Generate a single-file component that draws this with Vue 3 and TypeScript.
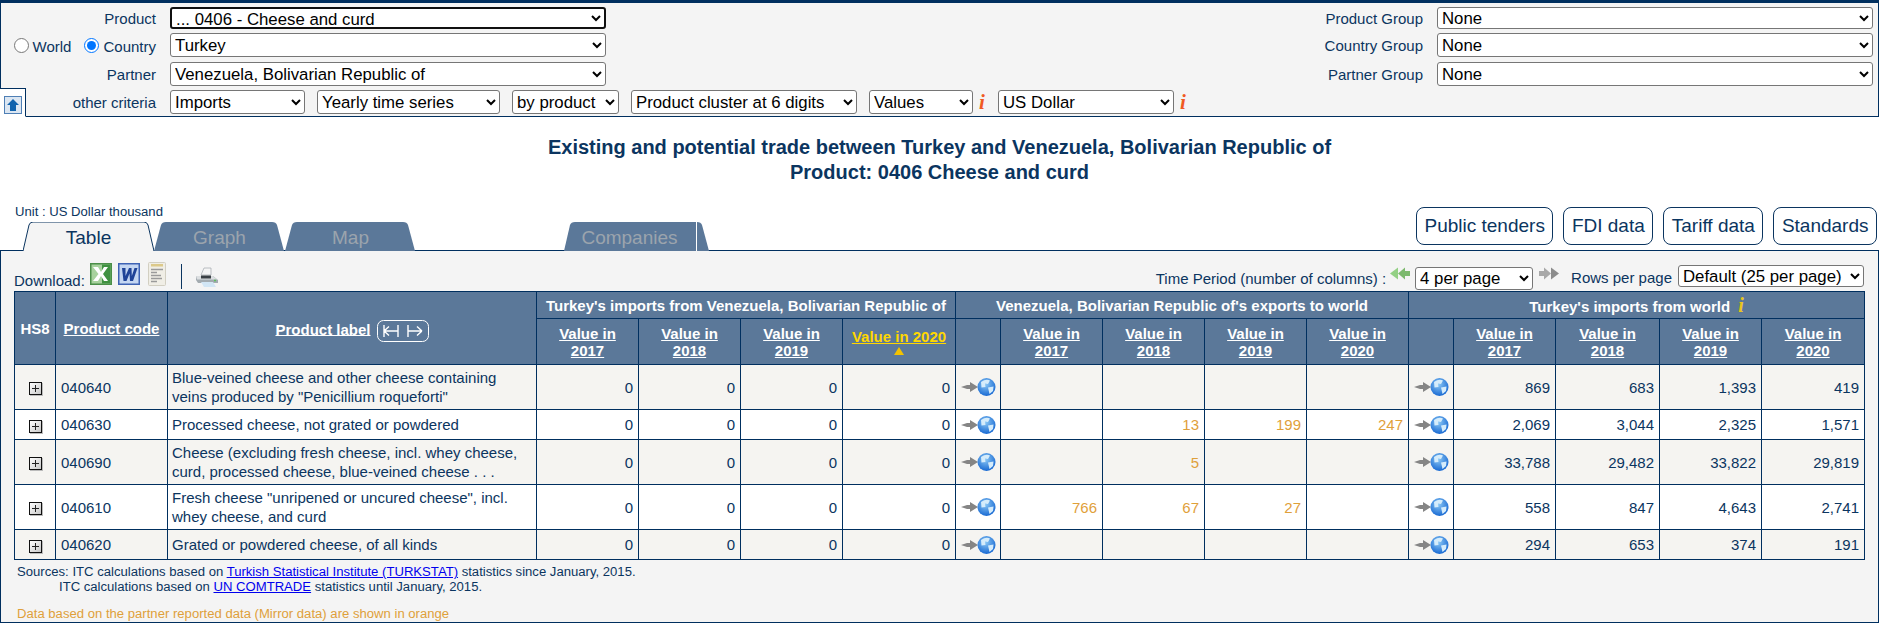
<script setup lang="ts">
interface Row {
  code: string
  label: string[]
  exports: (string | null)[]
  imports: string[]
}

const rows: Row[] = [
  {
    code: '040640',
    label: ['Blue-veined cheese and other cheese containing', 'veins produced by "Penicillium roqueforti"'],
    exports: [null, null, null, null],
    imports: ['869', '683', '1,393', '419'],
  },
  {
    code: '040630',
    label: ['Processed cheese, not grated or powdered'],
    exports: [null, '13', '199', '247'],
    imports: ['2,069', '3,044', '2,325', '1,571'],
  },
  {
    code: '040690',
    label: ['Cheese (excluding fresh cheese, incl. whey cheese,', 'curd, processed cheese, blue-veined cheese . . .'],
    exports: [null, '5', null, null],
    imports: ['33,788', '29,482', '33,822', '29,819'],
  },
  {
    code: '040610',
    label: ['Fresh cheese "unripened or uncured cheese", incl.', 'whey cheese, and curd'],
    exports: ['766', '67', '27', null],
    imports: ['558', '847', '4,643', '2,741'],
  },
  {
    code: '040620',
    label: ['Grated or powdered cheese, of all kinds'],
    exports: [null, null, null, null],
    imports: ['294', '653', '374', '191'],
  },
]

const years = ['2017', '2018', '2019', '2020']
const colWidths = [41, 112, 369, 102, 102, 102, 113, 45, 102, 102, 102, 102, 45, 102, 104, 102, 103]
const sideTabs = ['Graph', 'Map']
</script>

<template>
  <div class="page">
    <!-- criteria panel -->
    <form class="criteria" @submit.prevent>
      <div class="crit-col">
        <div class="crit-row">
          <label class="crit-label">Product</label>
          <select class="sel wide focused"><option>... 0406 - Cheese and curd</option></select>
        </div>
        <div class="crit-row">
          <div class="crit-label radios">
            <input type="radio" name="scope" /><span class="world">World</span>
            <input type="radio" name="scope" checked /><span>Country</span>
          </div>
          <select class="sel wide"><option>Turkey</option></select>
        </div>
        <div class="crit-row">
          <label class="crit-label">Partner</label>
          <select class="sel wide"><option>Venezuela, Bolivarian Republic of</option></select>
        </div>
        <div class="crit-row other">
          <label class="crit-label">other criteria</label>
          <select class="sel w-imports"><option>Imports</option></select>
          <select class="sel w-series"><option>Yearly time series</option></select>
          <select class="sel w-by"><option>by product</option></select>
          <select class="sel w-cluster"><option>Product cluster at 6 digits</option></select>
          <select class="sel w-values"><option>Values</option></select>
          <span class="info">i</span>
          <select class="sel w-usd"><option>US Dollar</option></select>
          <span class="info">i</span>
        </div>
      </div>
      <div class="crit-col right">
        <div class="crit-row">
          <label class="crit-label">Product Group</label>
          <select class="sel wide"><option>None</option></select>
        </div>
        <div class="crit-row">
          <label class="crit-label">Country Group</label>
          <select class="sel wide"><option>None</option></select>
        </div>
        <div class="crit-row">
          <label class="crit-label">Partner Group</label>
          <select class="sel wide"><option>None</option></select>
        </div>
      </div>
      <div class="notch">
        <svg width="18" height="18" viewBox="0 0 18 18">
          <rect x="0.5" y="0.5" width="17" height="17" fill="#dbe6f2" stroke="#4f7fb5" />
          <path d="M9 3 L15 9 H12 V15 H6 V9 H3 Z" fill="#0f62ad" />
        </svg>
      </div>
    </form>

    <h1 class="title">
      Existing and potential trade between Turkey and Venezuela, Bolivarian Republic of<br />
      Product: 0406 Cheese and curd
    </h1>

    <!-- tabs -->
    <div class="tabbar">
      <div class="unit">Unit : US Dollar thousand</div>
      <div class="tabs">
        <a class="tab active">
          <svg class="tab-bg" viewBox="0 0 131 29" preserveAspectRatio="none">
            <path d="M0 29 L6 3 Q7 0 10 0 H121 Q124 0 125 3 L131 29" fill="#f4f4f4" stroke="#0b3560" />
          </svg>
          <span>Table</span>
        </a>
        <a v-for="t in sideTabs" :key="t" class="tab">
          <svg class="tab-bg" viewBox="0 0 131 29" preserveAspectRatio="none">
            <path d="M0 29 L7 3 Q8 0 12 0 H118 Q122 0 123 3 L130 29 Z" fill="#5b7899" />
          </svg>
          <span>{{ t }}</span>
        </a>
        <a class="tab companies">
          <svg class="tab-bg" viewBox="0 0 145 29" preserveAspectRatio="none">
            <path d="M0 29 L6 3 Q7 0 11 0 H133 Q137 0 138 3 L145 29 Z" fill="#5b7899" />
            <path d="M132.5 0 V29" stroke="#fff" />
          </svg>
          <span>Companies</span>
        </a>
      </div>
      <div class="links">
        <a class="link-btn">Public tenders</a>
        <a class="link-btn">FDI data</a>
        <a class="link-btn">Tariff data</a>
        <a class="link-btn">Standards</a>
      </div>
    </div>

    <div class="panel">
      <!-- toolbar -->
      <div class="toolbar">
        <div class="downloads">
          <span class="dl-label">Download:</span>
          <svg class="ic-xls" width="22" height="22" viewBox="0 0 22 22">
            <rect width="22" height="22" fill="#4b8f48" />
            <rect x="1.5" y="1.5" width="19" height="19" fill="#a8d29e" />
            <rect x="12" y="1.5" width="8.5" height="19" fill="#3f9140" />
            <path d="M3 4 H8 L11 9 L14 4 H18 L13 11 L18 18 H14 L11 13 L8 18 H3 L8.5 11 Z" fill="#fff" />
          </svg>
          <svg class="ic-doc" width="22" height="22" viewBox="0 0 22 22">
            <rect width="22" height="22" fill="#3e63b5" />
            <rect x="1.5" y="1.5" width="19" height="19" fill="#c4d6f2" />
            <path d="M4 5 H7.5 L7.5 13 L11 5 H13.5 L13.8 13 L16.5 5 H19.5 L15 18 H12 L11.5 10.5 L8.5 18 H5.5 Z" fill="#1f4398" />
          </svg>
          <svg class="ic-txt" width="18" height="24" viewBox="0 0 18 24">
            <rect x="0.5" y="0.5" width="17" height="23" rx="1" fill="#f0eee6" stroke="#d2cfc2" />
            <rect x="3" y="2" width="12" height="2.5" fill="#dcc98a" />
            <path d="M3 7.5 H15 M3 10.5 H9 M3 13.5 H13 M3 16.5 H14 M3 19.5 H9" stroke="#9a9a9a" stroke-width="1.4" />
          </svg>
          <span class="sep"></span>
          <svg class="printer" width="24" height="20" viewBox="0 0 24 20">
            <path d="M6 8 L9 1 H16 L16 8 Z" fill="#f5f5f5" stroke="#a2a8ad" stroke-width="0.7" />
            <path d="M1 9 H18 L23 13 V16 H3 L1 13 Z" fill="#a3abb0" />
            <path d="M1 9 H18 L22 12.5 H2 Z" fill="#dcdfe1" />
            <rect x="6" y="8.5" width="10" height="3" fill="#3a4045" />
            <path d="M6 15 H18 L21 20 H9 Z" fill="#d2e6f5" />
            <circle cx="20" cy="13.5" r="1" fill="#5ac05a" />
          </svg>
        </div>
        <div class="paging">
          <span class="pg-text">Time Period (number of columns) :</span>
          <svg class="chev" width="20" height="13" viewBox="0 0 20 13">
            <path d="M0 6.5 L8 0.5 V12.5 Z" fill="#93d084" />
            <path d="M8 6.5 L15 0.5 V4 H20 V9 H15 V12.5 Z" fill="#7cb96d" />
          </svg>
          <select class="sel w-per"><option>4 per page</option></select>
          <svg class="chev next" width="20" height="13" viewBox="0 0 20 13">
            <path d="M0 4 H5 V0.5 L12 6.5 L5 12.5 V9 H0 Z" fill="#a8a8a8" />
            <path d="M12 0.5 L20 6.5 L12 12.5 Z" fill="#8c8c8c" />
          </svg>
          <span class="pg-text rows-lbl">Rows per page</span>
          <select class="sel w-rows"><option>Default (25 per page)</option></select>
        </div>
      </div>

      <!-- data table -->
      <table class="data">
        <colgroup>
          <col v-for="(w, i) in colWidths" :key="i" :style="{ width: w + 'px' }" />
        </colgroup>
        <thead>
          <tr class="group-row">
            <th rowspan="2">HS8</th>
            <th rowspan="2"><a>Product code</a></th>
            <th rowspan="2" class="label-head">
              <a>Product label</a>
              <span class="expand">
                <svg width="52" height="22" viewBox="0 0 52 22">
                  <rect x="0.5" y="0.5" width="51" height="21" rx="6" fill="none" stroke="#fff" />
                  <path d="M7 5 V17 M21 5 V17 M7 11 H21 M7 11 L12 6.5 M7 11 L12 15.5 M31 5 V17 M31 11 H45 M45 11 L40 6.5 M45 11 L40 15.5" fill="none" stroke="#fff" stroke-width="1.4" />
                </svg>
              </span>
            </th>
            <th colspan="4">Turkey's imports from Venezuela, Bolivarian Republic of</th>
            <th colspan="5">Venezuela, Bolivarian Republic of's exports to world</th>
            <th colspan="5">Turkey's imports from world <span class="info yellow">i</span></th>
          </tr>
          <tr class="year-row">
            <th v-for="y in years.slice(0, 3)" :key="y"><a>Value in<br />{{ y }}</a></th>
            <th class="sorted"><a>Value in 2020</a><div class="tri"></div></th>
            <th></th>
            <th v-for="y in years" :key="'e' + y"><a>Value in<br />{{ y }}</a></th>
            <th></th>
            <th v-for="y in years" :key="'i' + y"><a>Value in<br />{{ y }}</a></th>
          </tr>
        </thead>
        <tbody>
          <tr v-for="(r, i) in rows" :key="r.code" :class="[i % 2 === 0 ? 'odd' : 'even', r.label.length > 1 ? 'tall' : '']">
            <td class="center"><span class="plus"></span></td>
            <td>{{ r.code }}</td>
            <td class="label-cell"><template v-for="(l, n) in r.label" :key="n"><br v-if="n" />{{ l }}</template></td>
            <td class="num">0</td>
            <td class="num">0</td>
            <td class="num">0</td>
            <td class="num">0</td>
            <td class="center">
              <svg class="arrow-globe" width="36" height="20" viewBox="0 0 36 20">
                <defs>
                  <radialGradient id="globe" cx="0.45" cy="0.35" r="0.7">
                    <stop offset="0" stop-color="#8cc8f5" />
                    <stop offset="1" stop-color="#0f62d0" />
                  </radialGradient>
                </defs>
                <path d="M1 10 L7 8 H10 V5 L18 10 L10 15 V12 H7 Z" fill="#858585" />
                <circle cx="26.5" cy="10" r="9" fill="url(#globe)" />
                <path d="M21 5 Q26 1.5 30 3.5 L28 7 L25 6.5 L25.5 10 L21.5 10.5 Z M28 10.5 L33.5 9.5 L33 14 L29.5 17 Z" fill="#d5ecfb" />
              </svg>
            </td>
            <td v-for="(v, n) in r.exports" :key="n" class="num mirror">{{ v }}</td>
            <td class="center">
              <svg class="arrow-globe" width="36" height="20" viewBox="0 0 36 20">
                <path d="M1 10 L7 8 H10 V5 L18 10 L10 15 V12 H7 Z" fill="#858585" />
                <circle cx="26.5" cy="10" r="9" fill="url(#globe)" />
                <path d="M21 5 Q26 1.5 30 3.5 L28 7 L25 6.5 L25.5 10 L21.5 10.5 Z M28 10.5 L33.5 9.5 L33 14 L29.5 17 Z" fill="#d5ecfb" />
              </svg>
            </td>
            <td v-for="(v, n) in r.imports" :key="n" class="num">{{ v }}</td>
          </tr>
        </tbody>
      </table>

      <div class="sources">
        <div>Sources: ITC calculations based on <a>Turkish Statistical Institute (TURKSTAT)</a> statistics since January, 2015.</div>
        <div class="src2">ITC calculations based on <a>UN COMTRADE</a> statistics until January, 2015.</div>
        <div class="note">Data based on the partner reported data (Mirror data) are shown in orange</div>
      </div>
    </div>
  </div>
</template>

<style>
html, body {
  margin: 0;
  background: #fff;
}
</style>

<style scoped>
.page {
  font-family: "Liberation Sans", Arial, sans-serif;
  color: #0b3560;
  font-size: 15px;
  width: 1879px;
  height: 625px;
  overflow: hidden;
}

.criteria {
  position: relative;
  display: flex;
  justify-content: space-between;
  height: 113px;
  background: #f4f4f4;
  border-top: 3px solid #002f5f;
  border-bottom: 1px solid #002f5f;
  border-left: 1px solid #002f5f;
  border-right: 1px solid #002f5f;
  padding: 0 5px 0 0;
}
.crit-col {
  padding-top: 4px;
}
.crit-row {
  display: flex;
  align-items: center;
  height: 24px;
  margin-top: 4px;
}
.right .crit-row {
  justify-content: flex-end;
}
.crit-row:first-child {
  height: 22px;
  margin-top: 0;
}
.crit-row:first-child .sel {
  height: 22px;
}
.crit-row:nth-child(3) {
  margin-top: 5px;
}
.crit-label {
  text-align: right;
  font-size: 15px;
  margin-right: 14px;
}
.crit-col:first-child .crit-label {
  width: 155px;
}
.radios {
  display: flex;
  justify-content: flex-end;
  align-items: center;
}
.radios input {
  margin: 0 4px 0 0;
  width: 15px;
  height: 15px;
}
.radios span {
  margin-top: 2px;
}
.radios .world {
  margin-right: 13px;
}
.sel {
  font-family: "Liberation Sans", Arial, sans-serif;
  font-size: 16.8px;
  height: 24px;
  background: #fff;
  color: #000;
  border: 1px solid #767676;
  border-radius: 3px;
  padding: 0;
  box-sizing: border-box;
}
.wide {
  width: 436px;
}
.crit-row .focused {
  border: 2px solid #101010;
}
.other .sel {
  margin-right: 12px;
}
.w-imports { width: 135px; }
.w-series { width: 183px; }
.w-by { width: 107px; }
.w-cluster { width: 226px; }
.other .w-values { width: 104px; margin-right: 0; }
.other .w-usd { width: 176px; margin-right: 0; }
.info {
  font-family: "Liberation Serif", serif;
  font-weight: bold;
  font-style: italic;
  font-size: 21px;
  color: #f05a22;
  width: 25px;
  padding-left: 6px;
  box-sizing: border-box;
}
.info.yellow {
  color: #e8c61c;
  font-size: 20px;
  margin-left: 4px;
  padding: 0;
  width: auto;
}
.notch {
  position: absolute;
  left: -1px;
  bottom: -1px;
  width: 26px;
  height: 29px;
  background: #fff;
  border-top: 1px solid #002f5f;
  border-right: 1px solid #002f5f;
  border-bottom: 1px solid #fff;
  display: flex;
  align-items: flex-end;
  padding: 0 0 2px 4px;
  box-sizing: border-box;
}

.title {
  margin: 18px 0 0;
  height: 53px;
  font-size: 20px;
  line-height: 25px;
  text-align: center;
  font-weight: bold;
  color: #0b3560;
}

.tabbar {
  position: relative;
  height: 62px;
}
.unit {
  position: absolute;
  left: 15px;
  top: 16px;
  font-size: 13.12px;
  color: #0b3560;
}
.tabs {
  position: absolute;
  z-index: 1;
  left: 23px;
  top: 34px;
  display: flex;
}
.tab {
  position: relative;
  width: 131px;
  height: 29px;
  display: flex;
  align-items: center;
  justify-content: center;
  padding-top: 2px;
  box-sizing: border-box;
  font-size: 19px;
  color: #9ba4ad;
}
.tab span {
  position: relative;
}
.tab.active {
  color: #0b3560;
}
.tab-bg {
  position: absolute;
  inset: 0;
  width: 100%;
  height: 100%;
}
.companies {
  margin-left: 148px;
  width: 145px;
  padding-right: 14px;
}
.links {
  position: absolute;
  right: 2px;
  top: 19px;
  display: flex;
  gap: 10px;
}
.link-btn {
  height: 36px;
  line-height: 36px;
  padding: 0 7.5px;
  border: 1px solid #0b3560;
  border-radius: 8px;
  background: #fff;
  font-size: 19px;
  color: #0b3560;
}

.panel {
  position: relative;
  box-sizing: border-box;
  height: 373px;
  border: 1px solid #002f5f;
  background: #f4f4f4;
  padding: 0 14px 0 13px;
}
.toolbar {
  display: flex;
  justify-content: space-between;
  height: 40px;
}
.downloads {
  display: flex;
  align-items: flex-start;
}
.dl-label {
  margin: 21px 5px 0 0;
}
.ic-xls, .ic-doc {
  margin: 12px 6px 0 0;
}
.ic-doc {
  margin-right: 8px;
}
.ic-txt {
  margin-top: 11px;
}
.sep {
  width: 1px;
  height: 25px;
  background: #0b3560;
  margin: 13px 13px 0 15px;
}
.printer {
  margin-top: 16px;
}
.paging {
  display: flex;
  align-items: flex-start;
}
.pg-text {
  margin-top: 19px;
}
.chev {
  margin: 16px 5px 0 4px;
}
.chev.next {
  margin: 16px 12px 0 6px;
}
.w-per {
  width: 118px;
  height: 23px;
  margin-top: 16px;
}
.w-rows {
  width: 186px;
  height: 22px;
  margin: 14px 0 0 6px;
}
.rows-lbl {
  margin-top: 18px;
}

.data {
  table-layout: fixed;
  width: 1851px;
  border-collapse: collapse;
  font-size: 15px;
  color: #0b3560;
}
.data th, .data td {
  border: 1px solid #002f5f;
  padding: 0 5px;
}
.data th {
  background: #5b7899;
  color: #fff;
  font-weight: bold;
  text-align: center;
}
.data th a {
  text-decoration: underline;
}
.data .label-head {
  padding-top: 5px;
}
.group-row th {
  height: 26px;
}
.year-row th {
  height: 45px;
  line-height: 17px;
}
.sorted a {
  color: #ffd700;
}
.tri {
  width: 0;
  height: 0;
  margin: 2px auto 0;
  border-left: 5px solid transparent;
  border-right: 5px solid transparent;
  border-bottom: 8px solid #f2c200;
}
.expand {
  display: inline-block;
  vertical-align: middle;
  margin-left: 6px;
}
.expand svg {
  display: block;
}
tbody tr {
  height: 30px;
}
tbody tr.tall {
  height: 45px;
}
.odd td {
  background: #f5f4f1;
}
.even td {
  background: #fff;
}
.data td {
  line-height: 19px;
}
.data .label-cell {
  padding-left: 4px;
}
.num {
  text-align: right;
}
.mirror {
  color: #dfa03a;
}
.data .center {
  text-align: center;
  padding: 0;
}
.plus {
  display: inline-block;
  position: relative;
  width: 13px;
  height: 13px;
  vertical-align: middle;
  box-sizing: border-box;
  border: 1px solid #111;
  background: linear-gradient(135deg, #fff, #c8c8c8);
  box-shadow: 1px 1px 0 #bbb;
}
.plus::before, .plus::after {
  content: "";
  position: absolute;
  background: #222;
}
.plus::before {
  left: 2px;
  right: 2px;
  top: 5px;
  height: 1px;
}
.plus::after {
  top: 2px;
  bottom: 2px;
  left: 5px;
  width: 1px;
}
.arrow-globe {
  display: block;
  margin: 0 auto;
}

.sources {
  font-size: 13.12px;
  padding: 4px 0 0 3px;
  line-height: 15px;
  color: #0b3560;
}
.sources a {
  color: #0000ee;
  text-decoration: underline;
}
.src2 {
  padding-left: 42px;
}
.note {
  margin-top: 12px;
  color: #dfa03a;
}
</style>
